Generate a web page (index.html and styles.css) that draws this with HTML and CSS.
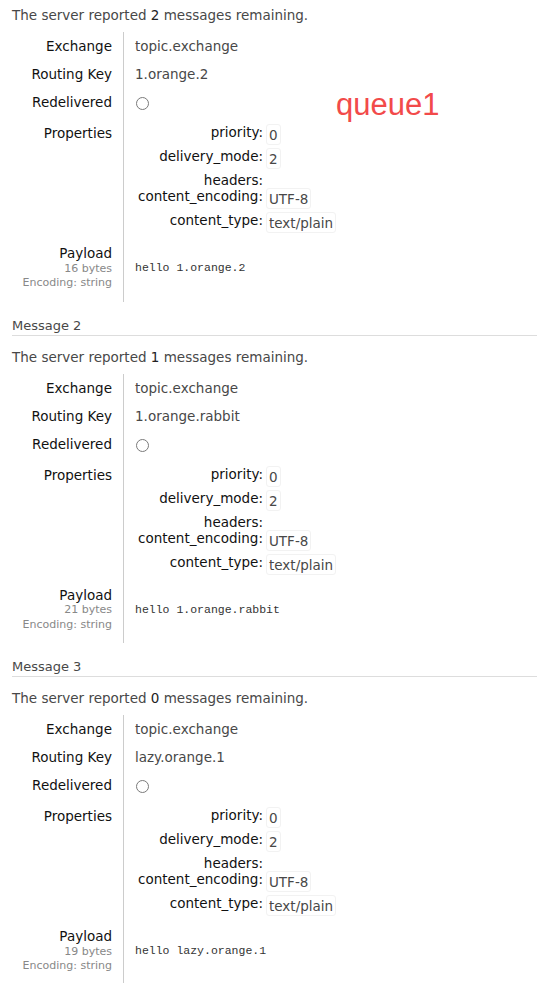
FILE: index.html
```html
<!DOCTYPE html>
<html lang="en">
<head>
  <meta charset="UTF-8" />
  <title>Get messages</title>
  <link rel="stylesheet" href="styles.css">
</head>
<body>
  <div class="page">
    <span class="note">queue1</span>

    <div class="message">
      <p class="remaining">The server reported <b>2</b> messages remaining.</p>
      <table class="facts">
        <tr><th>Exchange</th><td>topic.exchange</td></tr>
        <tr><th>Routing Key</th><td>1.orange.2</td></tr>
        <tr><th>Redelivered</th><td><span class="radio"></span></td></tr>
        <tr>
          <th>Properties</th>
          <td>
            <table class="props">
              <tr><th>priority:</th><td><span class="val">0</span></td></tr>
              <tr><th>delivery_mode:</th><td><span class="val">2</span></td></tr>
              <tr><th>headers:</th><td></td></tr>
              <tr><th>content_encoding:</th><td><span class="val">UTF-8</span></td></tr>
              <tr><th>content_type:</th><td><span class="val">text/plain</span></td></tr>
            </table>
          </td>
        </tr>
        <tr class="payload">
          <th>Payload<br><sub>16 bytes</sub><br><sub>Encoding: string</sub></th>
          <td><pre>hello 1.orange.2</pre></td>
        </tr>
      </table>
    </div>

    <div class="message">
      <h3>Message 2</h3>
      <p class="remaining">The server reported <b>1</b> messages remaining.</p>
      <table class="facts">
        <tr><th>Exchange</th><td>topic.exchange</td></tr>
        <tr><th>Routing Key</th><td>1.orange.rabbit</td></tr>
        <tr><th>Redelivered</th><td><span class="radio"></span></td></tr>
        <tr>
          <th>Properties</th>
          <td>
            <table class="props">
              <tr><th>priority:</th><td><span class="val">0</span></td></tr>
              <tr><th>delivery_mode:</th><td><span class="val">2</span></td></tr>
              <tr><th>headers:</th><td></td></tr>
              <tr><th>content_encoding:</th><td><span class="val">UTF-8</span></td></tr>
              <tr><th>content_type:</th><td><span class="val">text/plain</span></td></tr>
            </table>
          </td>
        </tr>
        <tr class="payload">
          <th>Payload<br><sub>21 bytes</sub><br><sub>Encoding: string</sub></th>
          <td><pre>hello 1.orange.rabbit</pre></td>
        </tr>
      </table>
    </div>

    <div class="message">
      <h3>Message 3</h3>
      <p class="remaining">The server reported <b>0</b> messages remaining.</p>
      <table class="facts">
        <tr><th>Exchange</th><td>topic.exchange</td></tr>
        <tr><th>Routing Key</th><td>lazy.orange.1</td></tr>
        <tr><th>Redelivered</th><td><span class="radio"></span></td></tr>
        <tr>
          <th>Properties</th>
          <td>
            <table class="props">
              <tr><th>priority:</th><td><span class="val">0</span></td></tr>
              <tr><th>delivery_mode:</th><td><span class="val">2</span></td></tr>
              <tr><th>headers:</th><td></td></tr>
              <tr><th>content_encoding:</th><td><span class="val">UTF-8</span></td></tr>
              <tr><th>content_type:</th><td><span class="val">text/plain</span></td></tr>
            </table>
          </td>
        </tr>
        <tr class="payload">
          <th>Payload<br><sub>19 bytes</sub><br><sub>Encoding: string</sub></th>
          <td><pre>hello lazy.orange.1</pre></td>
        </tr>
      </table>
    </div>
  </div>
</body>
</html>
```

FILE: styles.css
```css
body {
  margin: 0;
  font-family: "DejaVu Sans", Verdana, sans-serif;
  font-size: 13.5px;
  color: #484848;
  background: #fff;
}
.page {
  position: relative;
  padding: 6px 0 0 12px;
}
.note {
  position: absolute;
  left: 336px;
  top: 87px;
  font-family: "Liberation Sans", Arial, sans-serif;
  font-size: 31px;
  color: #f24a4a;
}
.remaining {
  margin: 0 0 8px;
  line-height: 18px;
}
.remaining b {
  font-weight: normal;
  color: #222;
}
h3 {
  margin: 15px 0 12px;
  padding-bottom: 0;
  font-size: 13px;
  font-weight: normal;
  line-height: 18px;
  color: #484848;
  border-bottom: 1px solid #ddd;
}
table {
  border-collapse: collapse;
}
.facts > tbody > tr > th {
  width: 100px;
  padding: 5px 11px 5px 0;
  text-align: right;
  vertical-align: top;
  font-weight: normal;
  color: #111;
  line-height: 18px;
  border-right: 1px solid #ccc;
}
.facts > tbody > tr > td {
  padding: 5px 0 5px 11px;
  vertical-align: top;
  line-height: 18px;
}
.radio {
  display: block;
  width: 11px;
  height: 11px;
  margin: 4px 0 4px 1px;
  border: 1px solid #7a7a7a;
  border-radius: 50%;
}
.props {
  margin-bottom: 1px;
}
.props th {
  padding: 1px 3px 0 3px;
  text-align: right;
  vertical-align: top;
  font-weight: normal;
  color: #111;
  line-height: 15px;
  white-space: nowrap;
}
.props td {
  padding: 0;
  vertical-align: top;
}
.val {
  display: inline-block;
  padding: 2px 2px 1px;
  margin-bottom: 3px;
  line-height: 16px;
  border: 1px solid #f2f2f2;
  border-radius: 3px;
  color: #484848;
}
.facts > tbody > tr.payload > th {
  padding-bottom: 12px;
  line-height: 13.5px;
}
.payload sub {
  font-size: 11px;
  color: #888;
  vertical-align: baseline;
}
.facts > tbody > tr.payload > td {
  padding-bottom: 12px;
  vertical-align: middle;
}
pre {
  margin: 0;
  font-family: "Liberation Mono", "Courier New", monospace;
  font-size: 11.5px;
  color: #333;
}
```
